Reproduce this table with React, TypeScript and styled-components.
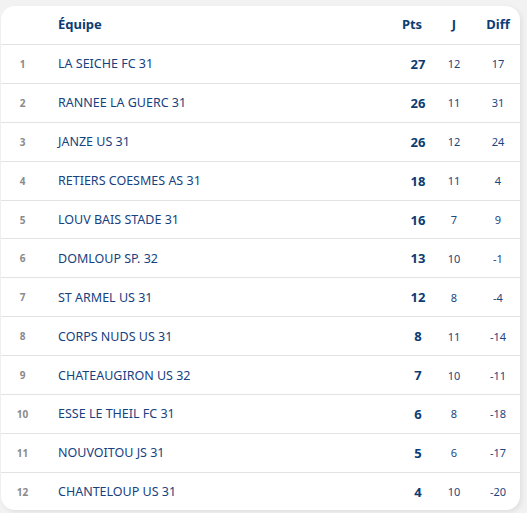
import * as React from "react";
import styled, { createGlobalStyle } from "styled-components";

const GlobalStyle = createGlobalStyle`
  html, body {
    margin: 0;
    padding: 0;
    background: #f2f2f2;
  }
  body {
    font-family: "Noto Sans", "Open Sans", sans-serif;
  }
`;

// Page wrapper with the grey surround
const Page = styled.div`
  width: 527px;
  height: 513px;
  padding: 6px 7px 3px 1px;
  box-sizing: border-box;
`;

// White rounded card holding the table
const Card = styled.div`
  background: #ffffff;
  border-radius: 14px;
  box-shadow: 2px 2px 5px rgba(0, 0, 0, 0.08);
  overflow: hidden;
  height: 100%;
`;

const Row = styled.div<{ $head?: boolean; $last?: boolean }>`
  display: grid;
  grid-template-columns: 57px 1fr 32px 44px 44px;
  align-items: center;
  height: ${(p) => (p.$head ? "38px" : "37.9px")};
  border-bottom: ${(p) => (p.$last ? "none" : "1px solid #e3e3e3")};
`;

const HeadCell = styled.div<{ $center?: boolean; $shift?: number }>`
  font-size: 13px;
  font-weight: 700;
  color: #0d3c73;
  text-align: ${(p) => (p.$center ? "center" : "left")};
  margin-top: -3px;
  margin-right: ${(p) => p.$shift ?? 0}px;
  white-space: nowrap;
`;

const Rank = styled.div`
  font-size: 10px;
  font-weight: 700;
  color: #8a8a8a;
  text-align: center;
  padding-right: 14px;
`;

const Team = styled.div`
  font-size: 12.5px;
  color: #16427f;
`;

const Points = styled.div`
  font-size: 13px;
  font-weight: 700;
  color: #0d3c73;
  text-align: center;
  padding-left: 4px;
`;

const Num = styled.div`
  font-size: 11px;
  color: #1d4580;
  text-align: center;
`;

const teams: [string, number, number, number][] = [
  ["LA SEICHE FC 31", 27, 12, 17],
  ["RANNEE LA GUERC 31", 26, 11, 31],
  ["JANZE US 31", 26, 12, 24],
  ["RETIERS COESMES AS 31", 18, 11, 4],
  ["LOUV BAIS STADE 31", 16, 7, 9],
  ["DOMLOUP SP. 32", 13, 10, -1],
  ["ST ARMEL US 31", 12, 8, -4],
  ["CORPS NUDS US 31", 8, 11, -14],
  ["CHATEAUGIRON US 32", 7, 10, -11],
  ["ESSE LE THEIL FC 31", 6, 8, -18],
  ["NOUVOITOU JS 31", 5, 6, -17],
  ["CHANTELOUP US 31", 4, 10, -20],
];

export default function App() {
  return (
    <Page>
      <GlobalStyle />
      <Card>
        <Row $head>
          <div />
          <HeadCell>Équipe</HeadCell>
          <HeadCell $center $shift={8}>Pts</HeadCell>
          <HeadCell $center>J</HeadCell>
          <HeadCell $center>Diff</HeadCell>
        </Row>
        {teams.map(([name, pts, j, diff], i) => (
          <Row key={name} $last={i === teams.length - 1}>
            <Rank>{i + 1}</Rank>
            <Team>{name}</Team>
            <Points>{pts}</Points>
            <Num>{j}</Num>
            <Num>{diff}</Num>
          </Row>
        ))}
      </Card>
    </Page>
  );
}
